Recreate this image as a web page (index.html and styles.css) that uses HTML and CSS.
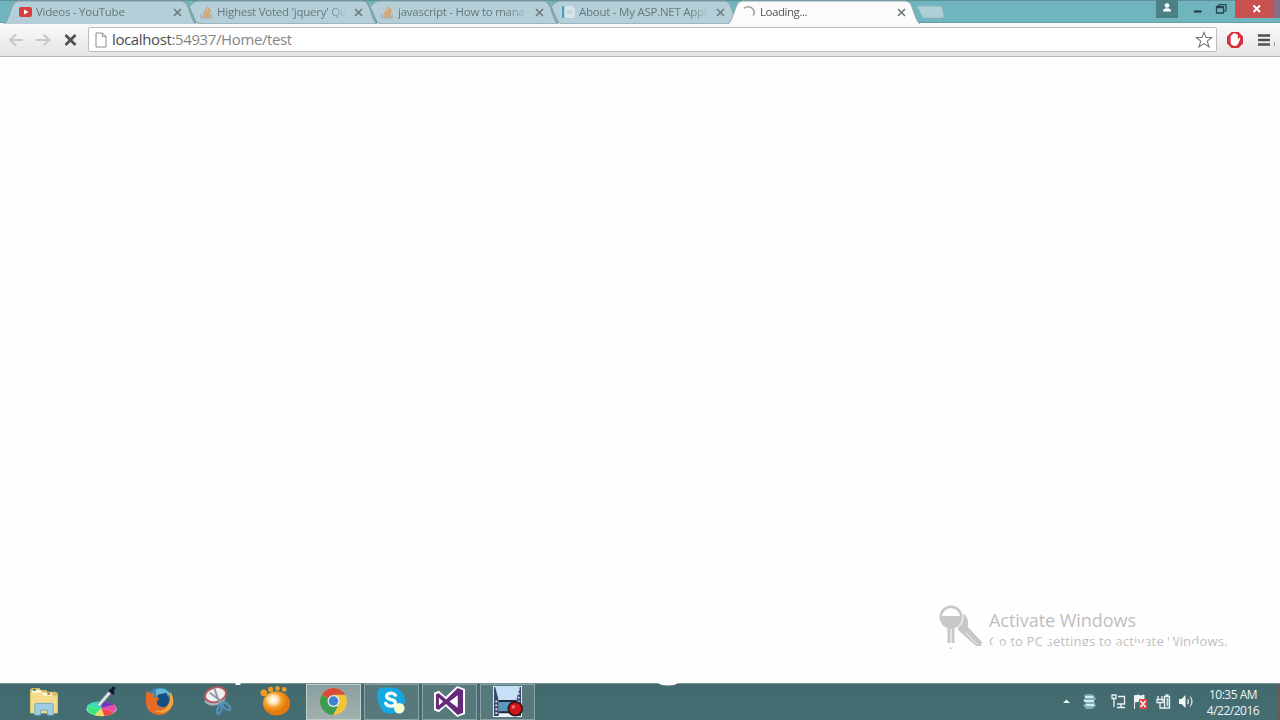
FILE: index.html
```html
<!DOCTYPE html>
<html lang="en">
<head>
<meta charset="utf-8">
<title>Loading...</title>
<link rel="stylesheet" href="styles.css">
</head>
<body>
<div class="screen">
  <header class="strip">
    <div class="tabs">
      <div class="tab">
        <svg class="shape" viewBox="0 0 192 24"><path d="M0 24C3 22 4 18 8 7Q10 1 14 1H177Q182 1 184 7C188 18 189 22 192 24"/></svg>
        <svg class="fav" viewBox="0 0 14 14"><rect x="0" y="2" width="13" height="10" rx="2" fill="#d83e40"/><path d="M5 4.500v5L9.500 7z" fill="#fff"/></svg>
        <span class="title t1">Videos - YouTube</span>
        <svg class="close" viewBox="0 0 9 9"><path d="M1 1l7 7M8 1L1 8"/></svg>
      </div>
      <div class="tab">
        <svg class="shape" viewBox="0 0 192 24"><path d="M0 0L4 6L11 22L14 24H192C189 22 188 18 184 7Q182 1 177 1H14Q8 1 5 6"/></svg>
        <svg class="fav" viewBox="0 0 14 14"><path d="M1 9v4h10V9" fill="none" stroke="#a1aaa9" stroke-width="1.2"/><path d="M3 11.300h6.500M3 9l6.400.7M3.400 6.700l6.200 1.600M5 4l5 3M7.300 1.800l3.400 4.500" stroke="#df9d58" stroke-width="1.400"/></svg>
        <span class="title t2">Highest Voted 'jquery' Qu</span>
        <svg class="close" viewBox="0 0 9 9"><path d="M1 1l7 7M8 1L1 8"/></svg>
      </div>
      <div class="tab">
        <svg class="shape" viewBox="0 0 192 24"><path d="M0 0L4 6L11 22L14 24H192C189 22 188 18 184 7Q182 1 177 1H14Q8 1 5 6"/></svg>
        <svg class="fav" viewBox="0 0 14 14"><path d="M1 9v4h10V9" fill="none" stroke="#a1aaa9" stroke-width="1.2"/><path d="M3 11.300h6.500M3 9l6.400.7M3.400 6.700l6.200 1.600M5 4l5 3M7.300 1.800l3.400 4.500" stroke="#df9d58" stroke-width="1.400"/></svg>
        <span class="title t3">javascript - How to mana<i>g</i></span>
        <svg class="close" viewBox="0 0 9 9"><path d="M1 1l7 7M8 1L1 8"/></svg>
      </div>
      <div class="tab">
        <svg class="shape" viewBox="0 0 192 24"><path d="M0 0L4 6L11 22L14 24H192C189 22 188 18 184 7Q182 1 177 1H14Q8 1 5 6"/></svg>
        <svg class="fav" viewBox="0 0 14 14"><path d="M0 1h2v12H0z" fill="#4e9cc5"/><path d="M3 1h7l3 3v9H3z" fill="#d4e4ea"/><path d="M5 6h5M5 8h5" stroke="#abc9d5"/></svg>
        <span class="title t4">About - My ASP.NET Appl</span>
        <svg class="close" viewBox="0 0 9 9"><path d="M1 1l7 7M8 1L1 8"/></svg>
      </div>
      <div class="tab active">
        <svg class="shape" viewBox="0 0 192 24"><path d="M0 24C3 22 4 18 8 7Q10 1 14 1H177Q182 1 184 7C188 18 189 22 192 24"/></svg>
        <svg class="fav" viewBox="0 0 14 14"><path d="M1 3.200Q6 0 9.800 3.700Q12.500 7 10 10.500" fill="none" stroke="#a5a19e" stroke-width="1.6"/></svg>
        <span class="title t5">Loading...</span>
        <svg class="close" viewBox="0 0 9 9"><path d="M1 1l7 7M8 1L1 8"/></svg>
      </div>
      <svg class="newtab" viewBox="0 0 30 14"><path d="M3 1H23Q25 1 26 3L28 11Q28 13 26 13H9Q7 13 6 11L2 3Q1 1 3 1Z"/></svg>
    </div>
    <div class="controls">
      <div class="user"><svg viewBox="0 0 22 18"><circle cx="11" cy="5.500" r="2.300"/><path d="M7 11.500q0-3.200 4-3.200t4 3.200z"/></svg></div>
      <svg class="min" viewBox="0 0 24 18"><path d="M9 11.500h7.500" stroke="#20383c" stroke-width="2"/></svg>
      <svg class="max" viewBox="0 0 26 18"><path d="M10 6V4.500h7V11h-2" fill="none" stroke="#27474c" stroke-width="1.2"/><path d="M7.500 6.500h7V13h-7zM7.500 7.500h7" fill="none" stroke="#27474c" stroke-width="1.300"/></svg>
      <div class="exit"><svg viewBox="0 0 45 18"><path d="M18.500 5.500l6.500 6.500M25 5.500L18.500 12" stroke="#fff" stroke-width="1.900"/></svg></div>
    </div>
  </header>

  <div class="toolbar">
    <svg class="nav" viewBox="0 0 88 32"><path d="M23 16H10M16 10.500L10 16l6 5.500M36 16h13M43.500 10.500l6 5.500-6 5.500" fill="none" stroke="#c9c9c9" stroke-width="2"/><path d="M65.500 11l10 10M75.500 11l-10 10" stroke="#50504f" stroke-width="2.700"/></svg>
    <div class="omnibox">
      <svg class="page" viewBox="0 0 12 16"><path d="M1 1h6.500L11 4.500V15H1zM7.500 1v3.500H11" fill="#fff" stroke="#8c8c8c"/></svg>
      <span class="url"><b>localhost</b>:54937/Home/test</span>
      <svg class="star" viewBox="0 0 18 18"><path d="M9 1.500l2.100 5h5.600l-4.400 3.600 1.700 5.800L9 12.600l-5 3.300 1.700-5.800L1.300 6.500h5.600z" fill="#fff" stroke="#777" stroke-width="1.100"/></svg>
    </div>
    <svg class="block" viewBox="0 0 18 18"><path d="M5.500 1h7L17 5.500v7L12.500 17h-7L1 12.500v-7z" fill="#d5303c"/><path d="M4.600 9V5.500q0-1 1-1 0-1.300 1.200-1.300.5-1.200 1.700-.7 1.300-.5 1.800.7 1.500-.2 1.500 1.200v4.200l1.600-2q1.200.1.900 1.400l-2.200 5q-.8 1.900-3.500 1.900-4 0-4-4.400z" fill="#fff"/></svg>
    <svg class="menu" viewBox="0 0 22 16"><path d="M2 3.500h12M2 8h12M2 12.500h12" stroke="#4c504e" stroke-width="2.300"/><path d="M18.500 10v4" stroke="#999"/></svg>
  </div>

  <main class="content">
    <div class="watermark">
      <svg class="keys" viewBox="0 0 46 50"><path d="M22 8Q31 13 29 23L43 38l-1 4h-5L19 26" fill="#c8c8c8"/><path d="M27 29l11 11" stroke="#f5f5f5" stroke-width="1"/><circle cx="12" cy="13" r="12.500" fill="#fefefe"/><circle cx="12" cy="13" r="10.200" fill="#fefefe" stroke="#c8c8c8" stroke-width="2.600"/><path d="M2 12h20q0 8-6.500 11v16h-7V23Q2 20 2 12z" fill="#c8c8c8"/><path d="M12 25v14" stroke="#eee" stroke-width="1.500"/><path d="M10 43.500h4l-2 2z" fill="#ccc"/></svg>
      <div class="notice">
        <div class="act">Activate Windows</div>
        <div class="go"><span>Go to PC settings to activate Windows.</span>
          <svg class="fade" viewBox="0 0 240 20"><path d="M4 6h5v9H4zM7 11h4v4H7zM0 14.500h22V18H0zM17 12h6v3h-6zM53 5h7v7h-7zM53 12h4v3h-4zM83 15h21v6H83zM122 14.500h12v2h-12zM146 12h12v3h-12zM180 4h4v12h-4zM184 10h2v5h-2zM203 13h7v3h-7z"/></svg>
        </div>
      </div>
    </div>
  </main>

  <footer class="taskbar">
    <svg class="notches" viewBox="0 0 700 4"><path d="M235 0h6l-1 2h-4zM658 0h20q-3 2.500-10 2.500T658 0z"/></svg>
    <div class="apps">
      <div class="app"><svg viewBox="0 0 32 32"><path d="M2 4l2-2h8l1 2h6l1 2h9l2 2v20H2z" fill="#d7bd69"/><path d="M4 4h9l2 3h10v4H4z" fill="#fff7d6"/><path d="M3 7h11l2 3h14v18H3z" fill="#f3dd8c"/><path d="M5 4h3" stroke="#368f43" stroke-width="2"/><path d="M20 8h3" stroke="#c46336" stroke-width="2"/><path d="M7 30V19q0-1 2-1h15q2 0 2 1v11h-6v-5h-7v5z" fill="#9fcee0" stroke="#70abc8"/></svg></div>
      <div class="app"><svg viewBox="0 0 32 32"><ellipse cx="16" cy="23.500" rx="15.500" ry="7.500" fill="#e3e2e4"/><path d="M16 23L1 21q2-5 15-5z" fill="#3bdcb4"/><path d="M16 23L1 21q-1 7 8 9z" fill="#36e782"/><path d="M16 23L9 30q5 2 10 1z" fill="#efda67"/><path d="M16 23l3 8q7-1 10-4z" fill="#ef4b43"/><path d="M16 23l13 4q4-4 0-8z" fill="#eb4aa5"/><path d="M16 23l13-4q-5-3-13-3z" fill="#6d38bb"/><path d="M13 20L26 5" stroke="#79818a" stroke-width="4.500"/><path d="M13 20L26 5" stroke="#e1e8ea" stroke-width="2.700"/><path d="M24 4l5 4M27 5l2-4" stroke="#111b38" stroke-width="3.400"/></svg></div>
      <div class="app"><svg viewBox="0 0 32 32"><circle cx="16.500" cy="15" r="13.500" fill="#328abe"/><path d="M12 4q8-4 15 4l-5 6-9-1z" fill="#68b7d5"/><path d="M14 9l9-2 4 8-5 8-9-4z" fill="#174f80"/><path d="M3 5l4 3 4-1-1 4 6 2-3 3q1 7 7 6 6-1 7-7l1-6q4 7 1 12-4 9-13 9Q3 29 2 17q-1-6 1-12z" fill="#e46c24"/><path d="M28 7q6 12-4 19-7 4-14-1 11 3 15-6 3-6 1-12z" fill="#f4a43a"/></svg></div>
      <div class="app"><svg viewBox="0 0 32 32"><path d="M3 12v5q8 7 20-1l2-7" fill="#a8b5ba"/><ellipse cx="14" cy="9" rx="11" ry="7.500" transform="rotate(-15 14 9)" fill="#eef0f2" stroke="#bd5761" stroke-width="2"/><path d="M8 7l15 11M13 3l5 15" stroke="#8b9da6" stroke-width="2"/><ellipse cx="18" cy="24" rx="2" ry="5" transform="rotate(15 18 24)" fill="none" stroke="#528eb5" stroke-width="2.400"/><ellipse cx="25" cy="21" rx="2.500" ry="5" transform="rotate(-50 25 21)" fill="none" stroke="#528eb5" stroke-width="2.400"/></svg></div>
      <div class="app"><svg viewBox="0 0 32 32"><defs><radialGradient id="paw" cx=".38" cy=".35"><stop stop-color="#fff"/><stop offset=".35" stop-color="#ffe2b1"/><stop offset=".6" stop-color="#f7a22d"/><stop offset="1" stop-color="#e47a0b"/></radialGradient></defs><g fill="#ed9b28"><circle cx="4" cy="7" r="3.500"/><circle cx="11" cy="3.500" r="2.700"/><circle cx="18" cy="2.500" r="2.500"/><circle cx="25" cy="3.500" r="2.500"/></g><ellipse cx="17" cy="18" rx="14" ry="12.500" fill="url(#paw)"/></svg></div>
      <div class="app open current"><svg viewBox="0 0 32 32"><circle cx="16" cy="16" r="14" fill="#efc33c"/><path d="M16 16L3.900 9A14 14 0 0 1 28.100 9H16z" fill="#d84b3b"/><path d="M3.900 9L16 16l4 6-4.500 8A14 14 0 0 1 3.900 9z" fill="#3d9b54"/><circle cx="16" cy="15.500" r="6.200" fill="#edf1ee"/><circle cx="16" cy="15.500" r="4.900" fill="#4181d3"/></svg></div>
      <div class="app open"><svg viewBox="0 0 32 32"><path d="M2 4q4-4 10-2 11-2 16 6 3 5 1 11-1 10-11 9Q7 31 4 21 0 12 2 4z" fill="#16a8e0"/><path d="M20 9.500Q18 7 14.500 7.500 10.500 8 11 11q.4 2 4.500 3 5 1 4.500 4-.5 3-5 2.800-3.500 0-5-3" fill="none" stroke="#fff" stroke-width="3.400" stroke-linecap="round"/><circle cx="24" cy="23" r="5.500" fill="#f8fbcc"/></svg></div>
      <div class="app open"><svg viewBox="0 0 32 32"><path d="M0 7l5-2 7 6L24 0l8 3v26l-8 3-12-11-7 6-5-2z" fill="#fff"/><path fill-rule="evenodd" d="M2 8.500l3-1 7.500 6.500L24.500 2l5.500 2.500v23L24.500 30 12.500 18.500 5 24.500l-3-1zM5 12v8l4.500-4zM24.500 9.500L16 16l8.500 6.500z" fill="#662a7a"/></svg></div>
      <div class="app open"><svg viewBox="0 0 32 32"><path d="M1 0h30v32H1z" fill="#edf4fa"/><path d="M2 1h5v30H2zM25 1h5v30h-5z" fill="#39476f"/><path d="M3 0h26l-4 15H7z" fill="#c6e1f5"/><path d="M7 16h18v11H7z" fill="#5e98bc"/><path d="M4.500 15v16M27.500 3v27" stroke="#d3dde8" stroke-width="2" stroke-dasharray="2 2"/><path d="M7 15.500h18M7 27h18" stroke="#1c2a40" stroke-width="2"/><circle cx="24" cy="23.500" r="8" fill="#31171b"/><circle cx="24" cy="23.500" r="6.200" fill="#d2151b"/><circle cx="22" cy="21.500" r="1.700" fill="#ff7774"/></svg></div>
    </div>
    <div class="tray">
      <svg class="trayicons" viewBox="0 0 140 36"><path d="M3 20l3.500-3.500L10 20z" fill="#eef5f5"/><path d="M24 12q5-2 10 0l2 4-2 2 2 5-4 3h-6l-3-4 3-2-3-3 2-2z" fill="#80aebb"/><path d="M25 14h8M24 18h10M26 22h8" stroke="#d4eaf0" stroke-width="2"/><g fill="none" stroke="#eaf2f3" stroke-width="1.300"><path d="M58 13.500h6.500v7.500H57M61 21v3M57 24.500h8M52 12h4v3.500h-4zM54 15.500V24"/><path d="M98 13v3M102 13v3M97 16.500h6v3h-6zM100 20v5h4M104.500 13.500h5v11.500h-5zM105.500 12h3"/></g><path d="M106.500 15h2v8h-2z" fill="#c8dcde"/><path d="M74.500 12v14M75 13q3.500-2 5.500 0l3.500-1v7q-4-2-9 0z" fill="#edf4f5" stroke="#edf4f5"/><path d="M79 16h8v10h-8z" fill="#d94747"/><path d="M80.500 18l5 6M85.500 18l-5 6" stroke="#fff" stroke-width="1.400"/><path d="M119 16h2.500l4-4v13l-4-4H119z" fill="#f3f6f5"/><path d="M127.500 16q2 2.500 0 5M130 13.500q4 5 0 10" fill="none" stroke="#d9e7e8" stroke-width="1.200"/></svg>
      <div class="clock"><span class="time">10:35 AM</span><span class="date">4/22/2016</span></div>
    </div>
  </footer>
</div>
</body>
</html>
```
FILE: styles.css
```css
* { box-sizing: border-box; }
body { margin: 0; font-family: "Open Sans", "Noto Sans", sans-serif; }
svg { display: block; flex: none; }
.screen { width: 1280px; height: 720px; display: flex; flex-direction: column; overflow: hidden; background: #fefefe; }

.strip { height: 23px; flex: none; display: flex; justify-content: space-between; background: #70b5be; border-top: 1px solid #5d9299; border-bottom: 1px solid #679da4; }
.tabs { display: flex; padding-left: 4px; height: 24px; margin-top: -1px; }
.tab { position: relative; flex: none; width: 192px; height: 24px; margin-right: -11px; padding-left: 15px; display: flex; align-items: center; color: #66787d; }
.shape { position: absolute; left: 0; top: 0; width: 192px; height: 24px; }
.shape path { fill: #b4cfd7; stroke: #839da3; stroke-width: 1; }
.active { z-index: 2; color: #555; }
.active .shape path { fill: #fbfbfb; stroke: #8fa9ad; }
.fav { position: relative; width: 14px; height: 14px; margin-right: 3px; }
.title { position: relative; width: 132px; font-size: 11.5px; line-height: 18px; white-space: nowrap; -webkit-mask-image: linear-gradient(90deg, #000 110px, transparent 131px); mask-image: linear-gradient(90deg, #000 110px, transparent 131px); }
.title i { font-style: normal; opacity: 0; display: none; }
.t1 { letter-spacing: -0.25px; }
.t2, .t3, .t4 { letter-spacing: -0.25px; }
.t5 { letter-spacing: -0.45px; }
.close { position: relative; width: 9px; height: 9px; margin-left: 5px; }
.close path { fill: none; stroke: #6f7e82; stroke-width: 1.7; }
.newtab { width: 30px; height: 14px; margin: 5px 0 0 7px; }
.newtab path { fill: #b0ced5; stroke: #8fbac2; }
.controls { display: flex; height: 18px; margin-top: -1px; }
.controls svg { height: 18px; }
.user { width: 22px; background: #4d8085; margin-right: 7px; }
.user svg { width: 22px; fill: #fff; }
.min { width: 24px; }
.max { width: 26px; }
.exit { width: 45px; background: #c95051; border-right: 6px solid #877086; }
.exit svg { width: 45px; }

.toolbar { height: 34px; flex: none; display: flex; align-items: center; background: linear-gradient(#fafafa, #e5e5e5); border-bottom: 1px solid #b7b7b7; }
.nav { width: 88px; height: 32px; }
.omnibox { width: 1129px; height: 25px; display: flex; align-items: center; padding: 0 3px 0 6px; background: #fff; border: 1px solid #bdbdc0; border-radius: 2px; }
.page { width: 12px; height: 16px; }
.url { flex: 1; margin-left: 5px; font-size: 15px; line-height: 23px; letter-spacing: -0.38px; color: #858585; }
.url b { font-weight: 400; color: #4c4c4c; }
.star { width: 18px; height: 18px; }
.block { width: 18px; height: 18px; margin-left: 9px; }
.menu { width: 22px; height: 16px; margin-left: 12px; }

.content { flex: 1; display: flex; justify-content: flex-end; align-items: flex-end; padding: 0 45px 28px 0; background: #fefefe; }
.watermark { display: flex; width: 296px; height: 50px; }
.keys { width: 46px; height: 50px; margin-top: -1px; }
.notice { margin-left: 4px; color: #bebebe; white-space: nowrap; }
.act { font-size: 18px; line-height: 24px; margin-top: 3px; letter-spacing: -0.05px; }
.go { position: relative; font-size: 13px; line-height: 20px; letter-spacing: 0.19px; margin-top: -1px; }
.fade { position: absolute; left: 0; top: 0; width: 240px; height: 20px; fill: #fefefe; }

.taskbar { position: relative; height: 37px; flex: none; display: flex; justify-content: space-between; background: linear-gradient(#41696e, #456e73); border-top: 1px solid #789497; }
.notches { position: absolute; left: 0; top: -1px; width: 700px; height: 4px; fill: #fefefe; }
.apps { display: flex; gap: 3px; padding-left: 16px; }
.app { width: 55px; height: 36px; display: flex; align-items: center; justify-content: center; }
.app svg { width: 31px; height: 31px; margin-top: -1px; }
.open { border: 1px solid #8ba2a4; background: #58797c; }
.current { background: linear-gradient(#899f9f, #a1b1ad); border-color: #c1cdcb; }
.tray { display: flex; }
.trayicons { width: 140px; height: 36px; margin-top: -1px; }
.clock { width: 80px; display: flex; flex-direction: column; align-items: center; padding: 3px 11px 0 0; border-right: 3px solid #655d59; color: #f0f5f5; font-size: 12px; line-height: 16px; letter-spacing: -0.5px; }
```
